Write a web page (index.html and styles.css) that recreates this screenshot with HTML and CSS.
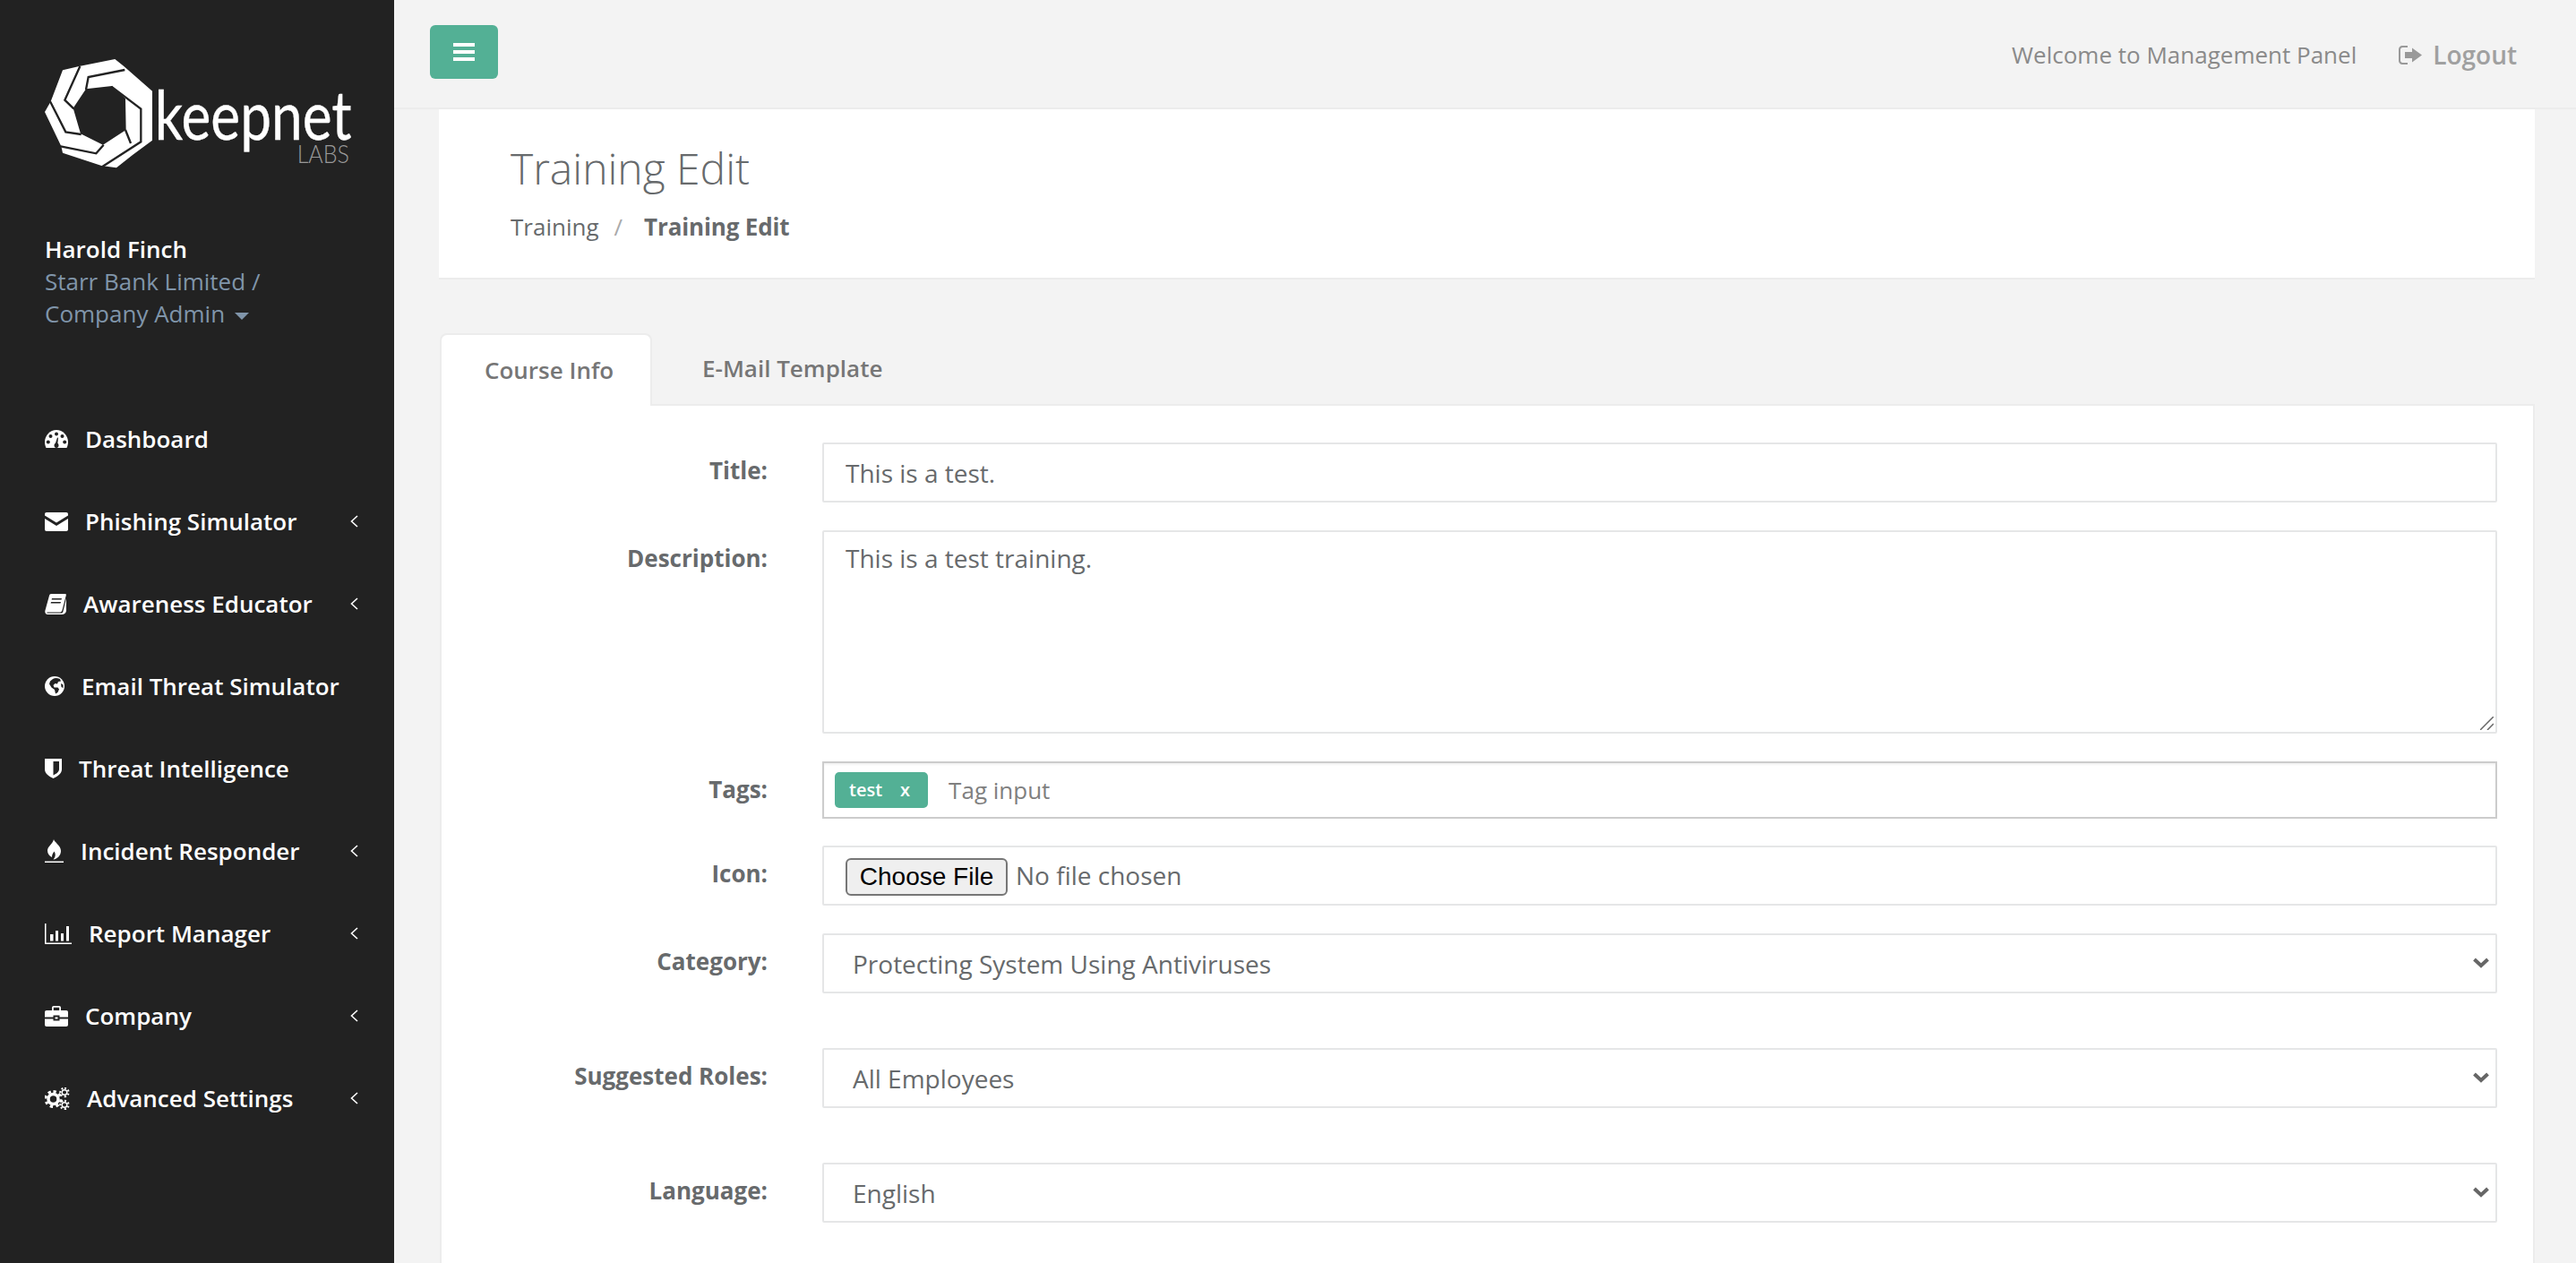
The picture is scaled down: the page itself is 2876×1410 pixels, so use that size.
FILE: index.html
```html
<!DOCTYPE html>
<html lang="en">
<head>
<meta charset="utf-8">
<title>Training Edit</title>
<link rel="stylesheet" href="styles.css">
</head>
<body>
<aside class="sidebar">
  <div class="logo">
    <svg class="logo-svg" viewBox="90 30 1035 375" width="345" height="125">
      <path fill="#fff" fill-rule="evenodd" d="M90 225L110 190L150 85L205 72L325 48L355 72L450 155V320L385 368L330 412L280 405L150 362L145 340ZM185 212L210 298L285 335L362 285L360 180L315 138L228 148Z"/>
      <g fill="none" stroke="#222" stroke-width="7">
        <path d="M208 72L157 185L187 214"/>
        <path d="M358 84L236 108L228 150"/>
        <path d="M313 140L412 215L412 325L283 408"/>
        <path d="M108 190L160 292L212 300"/>
        <path d="M143 340L262 364L287 335"/>
        <path d="M360 285L378 330"/>
      </g>
      <text class="logo-word" x="458" y="318" textLength="660" lengthAdjust="spacingAndGlyphs">keepnet</text>
      <text class="logo-labs" x="935" y="395" textLength="175" lengthAdjust="spacingAndGlyphs">LABS</text>
    </svg>
  </div>
  <div class="user">
    <div class="user-name">Harold Finch</div>
    <div class="user-role">Starr Bank Limited /<br>Company Admin <span class="caret"></span></div>
  </div>
  <ul class="menu">
    <li class="menu-item">
      <svg class="ico" width="26" height="20" viewBox="0 0 26 20"><path fill="#fff" d="M13 0C6 0 0 6 0 13.500C0 16 .6 18.200 1.500 20H24.500C25.400 18.200 26 16 26 13.500C26 6 20 0 13 0Z"/><g fill="#222"><circle cx="13" cy="4.500" r="2"/><circle cx="6.500" cy="7" r="2"/><circle cx="19.500" cy="7" r="2"/><circle cx="3.800" cy="13.500" r="2"/><circle cx="22.200" cy="13.500" r="2"/><path d="M10.500 17.500C10.500 16 11.500 15 12 14.600L14 8.500L15 8.800L14.400 14.800C15 15.300 15.500 16.300 15.500 17.500C15.500 18.800 14.500 20 13 20C11.500 20 10.500 18.800 10.500 17.500Z"/></g></svg>
      <span class="menu-text">Dashboard</span>
    </li>
    <li class="menu-item">
      <svg class="ico" width="26" height="21" viewBox="0 0 26 21"><path fill="#fff" d="M2 0H24C25.200 0 26 .8 26 2V3.500L13 11.500L0 3.500V2C0 .8 .8 0 2 0ZM0 7L13 15L26 7V19C26 20.200 25.200 21 24 21H2C.8 21 0 20.200 0 19Z"/></svg>
      <span class="menu-text">Phishing Simulator</span>
      <svg class="chev" width="9" height="14" viewBox="0 0 9 14"><path d="M8 1L1.500 7L8 13" fill="none" stroke="#fff" stroke-width="1.600"/></svg>
    </li>
    <li class="menu-item">
      <svg class="ico" width="24" height="23" viewBox="0 0 24 23"><path fill="#fff" fill-rule="evenodd" d="M7 0H23C24 0 24 1 23.700 2L19.500 18C19 20 18 20.500 16 20.500H3C2 20.500 1.700 21.500 3.200 21.500H18C19.500 21.500 20 21 20.400 19.700L24 5V19C23.500 21.500 21.500 23 19 23H3.500C1 23 0 21 .3 19L5 2C5.300 .8 6 0 7 0ZM8 5L7.600 6.500H18.500L19 5ZM7 9L6.600 10.500H17.500L18 9Z"/></svg>
      <span class="menu-text">Awareness Educator</span>
      <svg class="chev" width="9" height="14" viewBox="0 0 9 14"><path d="M8 1L1.500 7L8 13" fill="none" stroke="#fff" stroke-width="1.600"/></svg>
    </li>
    <li class="menu-item">
      <svg class="ico" width="22" height="22" viewBox="0 0 22 22"><circle cx="11" cy="11" r="11" fill="#fff"/><path fill="#222" d="M9 3C11 1.500 14 1.500 17 3L18 5.500L15 6L14 8.500L11.500 8L9.500 10L10.500 12.500L14.500 12.500L16 14.500L14.500 18L12 19.500L11 15L7.500 12.500L5 8.500L6 5.500Z"/><path fill="#222" d="M18 8L20.500 9.500L20.500 13L18.500 12Z"/></svg>
      <span class="menu-text">Email Threat Simulator</span>
    </li>
    <li class="menu-item">
      <svg class="ico" width="19" height="22" viewBox="0 0 19 22"><path fill="#fff" fill-rule="evenodd" d="M0 0H19V12C19 17 13 20.500 9.500 22C6 20.500 0 17 0 12ZM9.500 3V18.500C12 17.200 16 15 16 12V3Z"/></svg>
      <span class="menu-text">Threat Intelligence</span>
    </li>
    <li class="menu-item">
      <svg class="ico" width="21" height="26" viewBox="0 0 21 26"><path fill="#fff" d="M10 0C10.500 3 18 7 18 13C18 18 14 22 9.500 22.500C12 20 12.500 16.500 10.500 13.500C9 15.500 8 17 8 20C5 18.500 3 16 3 12.500C3 8 9 5 10 0ZM0 24.500H21V26H0Z"/></svg>
      <span class="menu-text">Incident Responder</span>
      <svg class="chev" width="9" height="14" viewBox="0 0 9 14"><path d="M8 1L1.500 7L8 13" fill="none" stroke="#fff" stroke-width="1.600"/></svg>
    </li>
    <li class="menu-item">
      <svg class="ico" width="30" height="23" viewBox="0 0 30 23"><path fill="#fff" d="M0 0H1.500V21.500H30V23H0ZM6 12H9.500V19.500H6ZM12 8H15V19.500H12ZM18 11H21V19.500H18ZM24 3H27V19.500H24Z"/></svg>
      <span class="menu-text">Report Manager</span>
      <svg class="chev" width="9" height="14" viewBox="0 0 9 14"><path d="M8 1L1.500 7L8 13" fill="none" stroke="#fff" stroke-width="1.600"/></svg>
    </li>
    <li class="menu-item">
      <svg class="ico" width="26" height="23" viewBox="0 0 26 23"><path fill="#fff" fill-rule="evenodd" d="M8 5V2C8 .8 8.800 0 10 0H16C17.200 0 18 .8 18 2V5H24C25.200 5 26 5.800 26 7V12.500H16.500V10.500H9.500V12.500H0V7C0 5.800 .8 5 2 5ZM9.800 5H16.200V1.800H9.800ZM0 14.500H9.500V16.500H16.500V14.500H26V21C26 22.200 25.200 23 24 23H2C.8 23 0 22.200 0 21ZM11.500 12.500H14.500V14.500H11.500Z"/></svg>
      <span class="menu-text">Company</span>
      <svg class="chev" width="9" height="14" viewBox="0 0 9 14"><path d="M8 1L1.500 7L8 13" fill="none" stroke="#fff" stroke-width="1.600"/></svg>
    </li>
    <li class="menu-item">
      <svg class="ico" width="28" height="25" viewBox="0 0 28 25"><g fill="none" stroke="#fff"><circle cx="9.500" cy="13" r="5.500" stroke-width="3.500"/><path stroke-width="3" stroke-dasharray="3.300 3.380" d="M9.500 4.500A8.500 8.500 0 1 1 9.400 4.500"/><circle cx="22" cy="5.500" r="2.800" stroke-width="1.500"/><path stroke-width="2" stroke-dasharray="2 2.200" d="M22 .8A4.700 4.700 0 1 1 21.900 .8"/><circle cx="22" cy="19.500" r="2.800" stroke-width="1.500"/><path stroke-width="2" stroke-dasharray="2 2.200" d="M22 14.800A4.700 4.700 0 1 1 21.900 14.800"/></g></svg>
      <span class="menu-text">Advanced Settings</span>
      <svg class="chev" width="9" height="14" viewBox="0 0 9 14"><path d="M8 1L1.500 7L8 13" fill="none" stroke="#fff" stroke-width="1.600"/></svg>
    </li>
  </ul>
</aside>
<main class="main">
  <header class="topbar">
    <button class="burger" type="button" aria-label="Toggle menu">
      <svg width="24" height="20" viewBox="0 0 24 20"><path fill="#fff" d="M0 0H24V4H0ZM0 8H24V12H0ZM0 16H24V20H0Z"/></svg>
    </button>
    <div class="topbar-right">
      <span class="welcome">Welcome to Management Panel</span>
      <a class="logout">
        <svg width="26" height="21" viewBox="0 0 26 21"><path fill="#999" d="M4 0H10V2H4.500C3 2 2 3 2 4.500V16.500C2 18 3 19 4.500 19H10V21H4C1.800 21 0 19.200 0 17V4C0 1.800 1.800 0 4 0ZM15 2.500L26 10.500L15 18.500V14H7V7H15Z"/></svg>
        <span>Logout</span>
      </a>
    </div>
  </header>
  <section class="heading">
    <h2 class="heading-title">Training Edit</h2>
    <ol class="crumbs">
      <li>Training</li>
      <li class="crumb-sep">/</li>
      <li class="crumb-current">Training Edit</li>
    </ol>
  </section>
  <section class="tabs">
    <div class="tab-list">
      <div class="tab tab-active">Course Info</div>
      <div class="tab">E-Mail Template</div>
    </div>
    <form class="panel">
      <div class="row">
        <label class="lbl">Title:</label>
        <div class="ctl"><input class="field" type="text" value="This is a test."></div>
      </div>
      <div class="row">
        <label class="lbl">Description:</label>
        <div class="ctl selwrap">
          <textarea class="field area">This is a test training.</textarea>
          <svg class="grip" width="15" height="15" viewBox="0 0 15 15"><path d="M0 15L15 0M8 15L15 8" fill="none" stroke="#666" stroke-width="1.500"/></svg>
        </div>
      </div>
      <div class="row row-tight">
        <label class="lbl">Tags:</label>
        <div class="ctl">
          <div class="tagbox">
            <span class="tag"><span>test</span><span>x</span></span>
            <span class="tag-input">Tag input</span>
          </div>
        </div>
      </div>
      <div class="row">
        <label class="lbl">Icon:</label>
        <div class="ctl"><div class="field filebox"><input class="file" type="file"></div></div>
      </div>
      <div class="row row-wide">
        <label class="lbl">Category:</label>
        <div class="ctl selwrap">
          <select class="field sel"><option>Protecting System Using Antiviruses</option></select>
          <svg class="sel-arrow" width="18" height="12" viewBox="0 0 18 12"><path d="M1.500 2L9 9L16.500 2" fill="none" stroke="#666" stroke-width="4"/></svg>
        </div>
      </div>
      <div class="row row-wide">
        <label class="lbl">Suggested Roles:</label>
        <div class="ctl selwrap">
          <select class="field sel"><option>All Employees</option></select>
          <svg class="sel-arrow" width="18" height="12" viewBox="0 0 18 12"><path d="M1.500 2L9 9L16.500 2" fill="none" stroke="#666" stroke-width="4"/></svg>
        </div>
      </div>
      <div class="row row-wide">
        <label class="lbl">Language:</label>
        <div class="ctl selwrap">
          <select class="field sel"><option>English</option></select>
          <svg class="sel-arrow" width="18" height="12" viewBox="0 0 18 12"><path d="M1.500 2L9 9L16.500 2" fill="none" stroke="#666" stroke-width="4"/></svg>
        </div>
      </div>
    </form>
  </section>
</main>
</body>
</html>
```
FILE: styles.css
```css
* { box-sizing: border-box; }
html, body { margin: 0; height: 100%; }
body {
  display: flex;
  height: 1410px;
  overflow: hidden;
  background: #f3f3f3;
  color: #676a6c;
  font-family: "Open Sans", "Liberation Sans", sans-serif;
  font-size: 26px;
  line-height: 36px;
}

/* Sidebar */
.sidebar { flex: 0 0 440px; background: #222; color: #fff; }
.logo { padding: 60px 0 0 50px; height: 260px; }
.logo-svg { display: block; overflow: visible; }
.logo-word { font-family: Lato, sans-serif; font-size: 225px; fill: #fff; stroke: #fff; stroke-width: 1px; }
.logo-labs { font-family: Lato, sans-serif; font-size: 84px; font-weight: 300; fill: #999; }
.user { padding-left: 50px; height: 184px; }
.user-name { font-weight: 600; color: #fff; }
.user-role { color: #8095aa; }
.caret {
  display: inline-block;
  margin-left: 4px;
  vertical-align: middle;
  border-top: 8px solid #8095aa;
  border-left: 8px solid transparent;
  border-right: 8px solid transparent;
}
.menu { list-style: none; margin: 0; padding: 0; }
.menu-item {
  display: flex;
  align-items: center;
  gap: 19px;
  height: 92px;
  padding: 0 40px 0 50px;
  font-weight: 600;
}
.ico { flex: none; }
.menu-text { flex: 1; }
.chev { flex: none; }

/* Top bar */
.main { flex: 1; min-width: 0; }
.topbar {
  display: flex;
  align-items: center;
  justify-content: space-between;
  height: 122px;
  padding: 0 66px 4px 40px;
  border-bottom: 2px solid #ececec;
}
.burger {
  display: flex;
  align-items: center;
  justify-content: center;
  width: 76px;
  height: 60px;
  padding: 0;
  border: 0;
  border-radius: 6px;
  background: #53b095;
}
.topbar-right { display: flex; align-items: center; gap: 47px; margin-top: 6px; }
.welcome { color: #8a8a8a; }
.logout { display: flex; align-items: center; gap: 12px; font-size: 28px; font-weight: 600; color: #a0a0a0; }

/* Page heading */
.heading {
  margin: 0 46px 0 50px;
  height: 190px;
  padding: 35px 80px 0;
  background: #fff;
  border-bottom: 2px solid #ececec;
}
.heading-title { margin: 0; font-size: 48px; line-height: 62px; font-weight: 300; color: #676a6c; }
.crumbs { display: flex; list-style: none; margin: 16px 0 0; padding: 0; }
.crumb-sep { margin: 0 24px 0 17px; color: #aaa; }
.crumb-current { font-weight: 700; letter-spacing: -.15px; }

/* Tabs */
.tabs { margin: 60px 46px 0 51px; }
.tab-list { display: flex; height: 81px; }
.tab {
  padding: 21px 50px 0;
  font-weight: 600;
  color: #767676;
  white-space: nowrap;
}
.tab:first-child { width: 237px; padding-left: 48px; }
.tab + .tab { padding-left: 56px; padding-top: 21px; }
.tab-active {
  position: relative;
  z-index: 1;
  height: 81px;
  background: #fff;
  border: 2px solid #ececec;
  border-bottom: 0;
  border-radius: 8px 8px 0 0;
}
.panel {
  margin-top: -2px;
  padding: 41px 40px 300px 0;
  background: #fff;
  border: 2px solid #ececec;
}

/* Form */
.row { display: flex; gap: 61px; margin-bottom: 31px; }
.row-tight { margin-bottom: 30px; }
.row-wide { margin-bottom: 61px; }
.lbl { flex: 0 0 364px; padding-top: 13px; text-align: right; font-weight: 700; color: #676a6c; }
.ctl { flex: 1; min-width: 0; }
.field {
  display: block;
  width: 100%;
  height: 67px;
  padding: 0 24px;
  background: #fff;
  border: 2px solid #e5e6e7;
  border-radius: 2px;
  color: #676a6c;
  font-family: "Open Sans", "Liberation Sans", sans-serif;
  font-size: 28px;
  outline: 0;
}
.area { height: 227px; padding-top: 11px; line-height: 36px; resize: none; }
.grip { position: absolute; right: 4px; bottom: 4px; }
.tagbox {
  display: flex;
  align-items: center;
  gap: 23px;
  height: 64px;
  padding: 0 12px;
  border: 2px solid #ccc;
  box-shadow: inset 0 2px 2px rgba(0,0,0,.05);
}
.tag {
  display: flex;
  align-items: center;
  gap: 20px;
  height: 40px;
  padding: 0 20px 0 16px;
  border-radius: 5px;
  background: #53b095;
  color: #fff;
  font-size: 20px;
  font-weight: 600;
}
.tag-input { font-size: 26px; color: #808080; }
.filebox { display: flex; align-items: center; padding: 3px 24px 0; }
.file { font-family: "Open Sans", "Liberation Sans", sans-serif; font-size: 28px; color: #676a6c; }
.file::file-selector-button {
  width: 181px;
  height: 42px;
  margin-right: 9px;
  padding: 0;
  background: #efefef;
  border: 2px solid #767676;
  border-radius: 6px;
  color: #000;
  font-family: "Liberation Sans", sans-serif;
  font-size: 28px;
}
.selwrap { position: relative; }
.sel { appearance: none; padding: 0 32px; }
.sel-arrow { position: absolute; right: 9px; top: 27px; }
```
